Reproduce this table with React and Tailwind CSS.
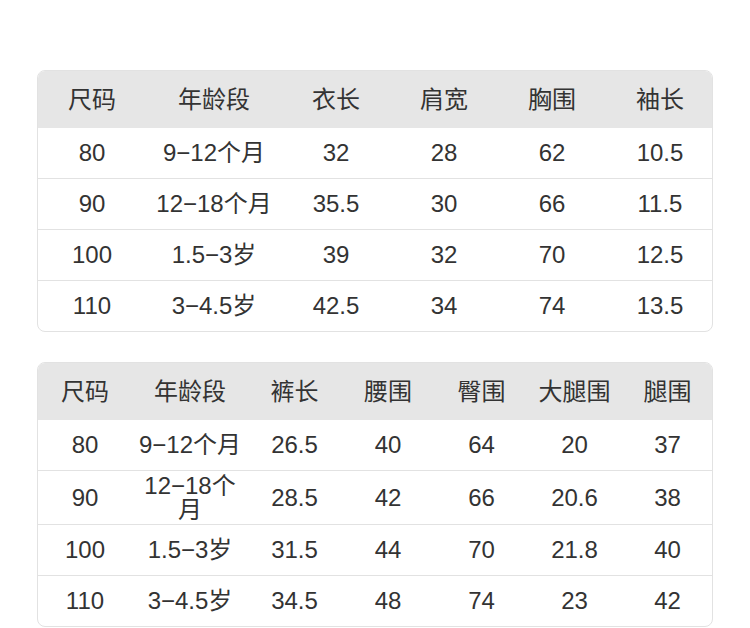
const tops = {
  cols: "grid-cols-[108px_136px_108px_108px_108px_108px]",
  head: ["尺码", "年龄段", "衣长", "肩宽", "胸围", "袖长"],
  rows: [
    ["80", "9−12个月", "32", "28", "62", "10.5"],
    ["90", "12−18个月", "35.5", "30", "66", "11.5"],
    ["100", "1.5−3岁", "39", "32", "70", "12.5"],
    ["110", "3−4.5岁", "42.5", "34", "74", "13.5"],
  ],
};

const pants = {
  cols: "grid-cols-[94px_116px_93px_94px_93px_93px_93px]",
  head: ["尺码", "年龄段", "裤长", "腰围", "臀围", "大腿围", "腿围"],
  rows: [
    ["80", "9−12个月", "26.5", "40", "64", "20", "37"],
    ["90", "12−18个月", "28.5", "42", "66", "20.6", "38"],
    ["100", "1.5−3岁", "31.5", "44", "70", "21.8", "40"],
    ["110", "3−4.5岁", "34.5", "48", "74", "23", "42"],
  ],
};

function SizeTable({ data }) {
  return (
    <div className="rounded-lg border border-[#e2e2e2] overflow-hidden bg-white">
      <div className={`grid ${data.cols} bg-[#e6e6e6] h-[57px] items-center`}>
        {data.head.map((h) => (
          <div key={h} className="text-center leading-[24px]">
            {h}
          </div>
        ))}
      </div>
      {data.rows.map((row, i) => (
        <div
          key={i}
          className={`grid ${data.cols} items-center ${
            i < data.rows.length - 1
              ? "min-h-[51px] border-b border-[#e2e2e2]"
              : "min-h-[50px]"
          }`}
        >
          {row.map((cell, j) => (
            <div key={j} className="text-center leading-[24px] px-1 py-[2.5px]">
              {cell}
            </div>
          ))}
        </div>
      ))}
    </div>
  );
}

export default function App() {
  return (
    <div
      className="bg-white min-h-screen pt-[70px] text-[24px] text-[#333333]"
      style={{ fontFamily: '"Liberation Sans", "Noto Sans CJK SC", sans-serif' }}
    >
      <div className="w-[676px] mx-auto flex flex-col gap-[30px]">
        <SizeTable data={tops} />
        <SizeTable data={pants} />
      </div>
    </div>
  );
}
